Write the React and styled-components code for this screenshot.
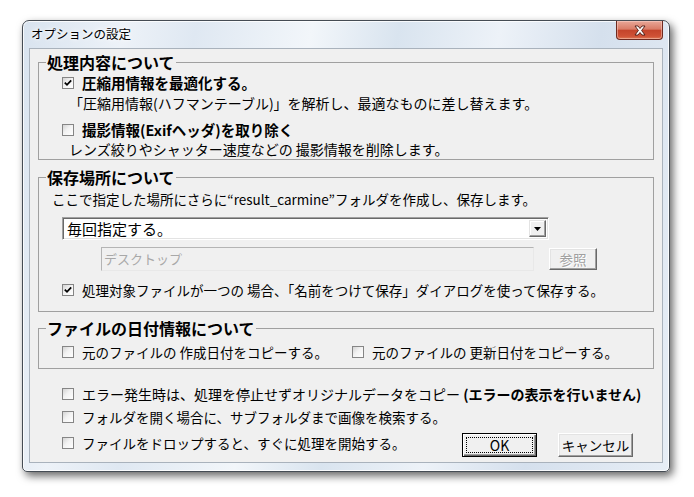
import styled, { createGlobalStyle } from "styled-components"

const Global = createGlobalStyle`
  html, body { margin: 0; background: #fff; }
  body { font-family: "Noto Sans CJK JP", "Noto Sans", sans-serif; color: #000; }
`

const Page = styled.div`
  width: 694px;
  height: 497px;
  box-sizing: border-box;
  padding: 20px 0 0 22px;
  overflow: hidden;
`

const Window = styled.div`
  width: 648px;
  height: 452px;
  box-sizing: border-box;
  border: 1px solid #454c54;
  border-radius: 7px 7px 5px 5px;
  padding: 0 6px 8px 6px;
  display: flex;
  flex-direction: column;
  background: linear-gradient(100deg, #d8e3ef 0%, #edf2f8 14%, #dfe8f2 24%, #f2f6fa 40%, #d9e4ef 52%, #edf2f8 66%, #d5e0ed 80%, #e7eef6 100%);
  box-shadow: inset 0 0 0 1px rgba(255,255,255,.8), 3px 4px 9px rgba(0,0,0,.6);
`

const TitleBar = styled.div`
  height: 27px;
  display: flex;
  align-items: flex-start;
  padding-left: 2px;
`

const Title = styled.div`
  font-size: 12.5px;
  line-height: 13px;
  margin-top: 6px;
  text-shadow: 0 0 6px #fff, 0 0 3px #fff;
`

const CloseButton = styled.div`
  margin-left: auto;
  width: 47px;
  height: 19px;
  box-sizing: border-box;
  border: 1px solid #6e2a20;
  border-top: none;
  border-radius: 0 0 4px 4px;
  background: linear-gradient(#e8a798 0%, #d97c67 45%, #c4442b 52%, #cf5236 85%, #de7a55 100%);
  box-shadow: inset 0 0 0 1px rgba(255,220,210,.45);
  display: flex;
  align-items: center;
  justify-content: center;
`

const Client = styled.div`
  flex: 1;
  box-sizing: border-box;
  border: 1px solid #a9b2bc;
  background: #f0f0f0;
  padding: 3px 8px 4px 8px;
  display: flex;
  flex-direction: column;
`

const Group = styled.fieldset`
  margin: ${p => p.$top || 0}px 0 0 0;
  padding: ${p => p.$padTop || 0}px 8px ${p => p.$padBottom || 0}px 7px;
  border: 1px solid #a0a0a0;
  min-width: 0;
  display: flex;
  flex-direction: column;
`

const Legend = styled.legend`
  padding: 0 1px;
  font-size: 16px;
  font-weight: 700;
  line-height: 20px;
`

const CheckRow = styled.div`
  display: flex;
  align-items: center;
  height: ${p => p.$h || 20}px;
  margin-left: ${p => p.$indent ?? 16}px;
  margin-top: ${p => p.$top || 0}px;
  ${p => p.$width && `width: ${p.$width}px; flex: none;`}
`

const Box = styled.span`
  width: 12px;
  height: 12px;
  box-sizing: border-box;
  border: 1px solid #858585;
  background: linear-gradient(135deg, #d4d4d4 0%, #f2f2f2 45%, #fff 100%);
  display: inline-flex;
  align-items: center;
  justify-content: center;
  flex: none;
  margin-right: 8px;
`

const Label = styled.span`
  font-size: ${p => (p.$bold ? 14.5 : p.$size || 13.5)}px;
  font-weight: ${p => (p.$bold ? 700 : 400)};
  white-space: nowrap;
  line-height: 20px;
`

const Strong = styled.span`
  font-size: 14px;
  font-weight: 700;
`

const Note = styled.div`
  font-size: ${p => p.$size || 13.5}px;
  line-height: ${p => p.$h || 20}px;
  height: ${p => p.$h || 20}px;
  margin-left: ${p => p.$indent}px;
  margin-top: ${p => p.$top || 0}px;
  white-space: nowrap;
`

const Select = styled.div`
  margin: 7px 0 0 16px;
  width: 487px;
  height: 23px;
  box-sizing: border-box;
  border: 1px solid;
  border-color: #a0a0a0 #fff #fff #a0a0a0;
  box-shadow: inset 1px 1px 0 #696969, inset -1px -1px 0 #e3e3e3;
  background: #fff;
  display: flex;
  align-items: center;
  padding: 2px 2px 2px 4px;
`

const SelectText = styled.span`
  flex: 1;
  font-size: 15px;
  line-height: 19px;
`

const DropButton = styled.span`
  width: 17px;
  height: 17px;
  box-sizing: border-box;
  background: #f0f0f0;
  border: 1px solid;
  border-color: #e3e3e3 #696969 #696969 #e3e3e3;
  box-shadow: inset -1px -1px 0 #a0a0a0, inset 1px 1px 0 #fff;
  display: flex;
  align-items: center;
  justify-content: center;
`

const PathRow = styled.div`
  display: flex;
  align-items: center;
  margin: 7px 0 0 55px;
  gap: 15px;
`

const DisabledInput = styled.div`
  width: 433px;
  height: 24px;
  box-sizing: border-box;
  border: 1px solid;
  border-color: #b4b4b4 #e8e8e8 #e8e8e8 #b4b4b4;
  background: #f0f0f0;
  color: #a8a8a8;
  font-size: 13px;
  line-height: 20px;
  padding: 1px 2px;
`

const Button = styled.div`
  width: ${p => p.$w || 75}px;
  height: ${p => p.$h || 24}px;
  box-sizing: border-box;
  background: #f0f0f0;
  border: 1px solid;
  border-color: ${p => (p.$default ? "#000" : "#fff #696969 #696969 #fff")};
  box-shadow: ${p =>
    p.$default
      ? "inset 1px 1px 0 #fff, inset -1px -1px 0 #696969, inset -2px -2px 0 #a0a0a0"
      : "inset -1px -1px 0 #a0a0a0, inset 1px 1px 0 #e3e3e3"};
  display: flex;
  align-items: center;
  justify-content: center;
  padding: 3px;
  font-size: 13.5px;
  white-space: nowrap;
  color: ${p => (p.$disabled ? "#a0a0a0" : "#000")};
  text-shadow: ${p => (p.$disabled ? "1px 1px 0 #fff" : "none")};
`

const Focus = styled.span`
  flex: 1;
  align-self: stretch;
  border: 1px dotted #000;
  display: flex;
  align-items: center;
  justify-content: center;
  font-size: 14px;
`

const DateRow = styled.div`
  display: flex;
  margin-top: 2px;
`

const Bottom = styled.div`
  display: flex;
  flex-direction: column;
  margin-top: 15px;
`

const LastRow = styled.div`
  display: flex;
  align-items: flex-start;
  margin-top: 6px;
  height: 24px;
`

const Buttons = styled.div`
  margin-left: auto;
  margin-right: 21px;
  display: flex;
  gap: 21px;
`

function Check() {
  return (
    <svg width="8" height="8" viewBox="0 0 8 8">
      <polyline points="0.8,3.6 3,5.8 7.2,1.4" fill="none" stroke="#000" strokeWidth="1.8" />
    </svg>
  )
}

function CheckItem({ checked, bold, size, children, ...rest }) {
  return (
    <CheckRow {...rest}>
      <Box>{checked && <Check />}</Box>
      <Label $bold={bold} $size={size}>{children}</Label>
    </CheckRow>
  )
}

export default function App() {
  return (
    <Page>
      <Global />
      <Window>
        <TitleBar>
          <Title>オプションの設定</Title>
          <CloseButton>
            <svg width="14" height="11" viewBox="0 0 14 11">
              <path d="M2 1 H5 L7 3.5 L9 1 H12 L8.6 5.5 L12 10 H9 L7 7.5 L5 10 H2 L5.4 5.5 Z" fill="#fff" stroke="#4a1a12" strokeWidth="0.9" strokeLinejoin="round" />
            </svg>
          </CloseButton>
        </TitleBar>
        <Client>
          <Group $padTop={1}>
            <Legend>処理内容について</Legend>
            <CheckItem checked bold>圧縮用情報を最適化する。</CheckItem>
            <Note $indent={23} $size={14}>「圧縮用情報(ハフマンテーブル)」を解析し、最適なものに差し替えます。</Note>
            <CheckItem bold $top={7}>撮影情報(Exifヘッダ)を取り除く</CheckItem>
            <Note $indent={23} $h={19} $size={14}>レンズ絞りやシャッター速度などの 撮影情報を削除します。</Note>
          </Group>

          <Group $top={7} $padTop={1} $padBottom={11}>
            <Legend>保存場所について</Legend>
            <Note $indent={6} $h={22}>ここで指定した場所にさらに“result_carmine”フォルダを作成し、保存します。</Note>
            <Select>
              <SelectText>毎回指定する。</SelectText>
              <DropButton>
                <svg width="7" height="4" viewBox="0 0 7 4"><path d="M0 0 H7 L3.5 4 Z" fill="#000" /></svg>
              </DropButton>
            </Select>
            <PathRow>
              <DisabledInput>デスクトップ</DisabledInput>
              <Button $w={48} $h={22} $disabled>参照</Button>
            </PathRow>
            <CheckItem checked $top={9}>処理対象ファイルが一つの 場合、「名前をつけて保存」ダイアログを使って保存する。</CheckItem>
          </Group>

          <Group $top={6} $padTop={2} $padBottom={6}>
            <Legend>ファイルの日付情報について</Legend>
            <DateRow>
              <CheckItem $width={290}>元のファイルの 作成日付をコピーする。</CheckItem>
              <CheckItem $indent={0}>元のファイルの 更新日付をコピーする。</CheckItem>
            </DateRow>
          </Group>

          <Bottom>
            <CheckItem $indent={24} size={14}>
              エラー発生時は、処理を停止せずオリジナルデータをコピー <Strong>(エラーの表示を行いません)</Strong>
            </CheckItem>
            <CheckItem $indent={24} $top={3}>フォルダを開く場合に、サブフォルダまで画像を検索する。</CheckItem>
            <LastRow>
              <CheckItem $indent={24}>ファイルをドロップすると、すぐに処理を開始する。</CheckItem>
              <Buttons>
                <Button $default><Focus>OK</Focus></Button>
                <Button>キャンセル</Button>
              </Buttons>
            </LastRow>
          </Bottom>
        </Client>
      </Window>
    </Page>
  )
}
